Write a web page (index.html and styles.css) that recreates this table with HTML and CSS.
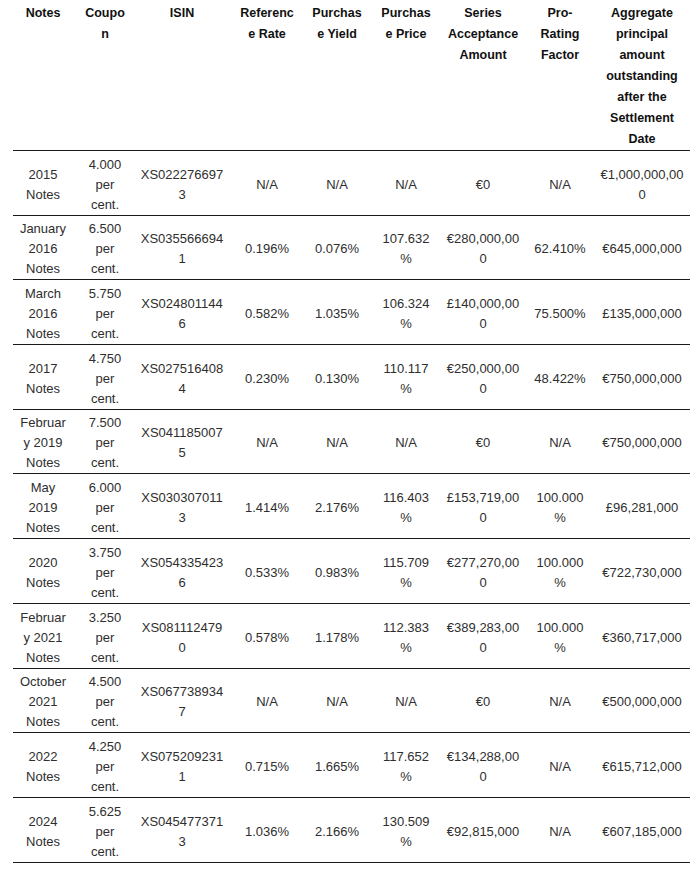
FILE: index.html
```html
<!DOCTYPE html>
<html>
<head>
<meta charset="utf-8">
<link rel="stylesheet" href="styles.css">
</head>
<body>
<table class="notes-table">
  <colgroup>
    <col class="w1"><col class="w2"><col class="w3"><col class="w4"><col class="w5"><col class="w6"><col class="w7"><col class="w8"><col class="w9">
  </colgroup>
  <thead>
    <tr>
      <th class="c1">Notes</th>
      <th class="c2">Coupon</th>
      <th class="c3">ISIN</th>
      <th class="c4">Reference Rate</th>
      <th class="c5">Purchase Yield</th>
      <th class="c6">Purchase Price</th>
      <th class="c7">Series Acceptance Amount</th>
      <th class="c8">Pro-Rating Factor</th>
      <th class="c9">Aggregate principal amount outstanding after the Settlement Date</th>
    </tr>
  </thead>
  <tbody>
    <tr><td class="c1">2015 Notes</td><td class="c2">4.000 per cent.</td><td class="c3">XS0222766973</td><td class="c4">N/A</td><td class="c5">N/A</td><td class="c6">N/A</td><td class="c7">€0</td><td class="c8">N/A</td><td class="c9">€1,000,000,000</td></tr>
    <tr><td class="c1">January 2016 Notes</td><td class="c2">6.500 per cent.</td><td class="c3">XS0355666941</td><td class="c4">0.196%</td><td class="c5">0.076%</td><td class="c6">107.632%</td><td class="c7">€280,000,000</td><td class="c8">62.410%</td><td class="c9">€645,000,000</td></tr>
    <tr><td class="c1">March 2016 Notes</td><td class="c2">5.750 per cent.</td><td class="c3">XS0248011446</td><td class="c4">0.582%</td><td class="c5">1.035%</td><td class="c6">106.324%</td><td class="c7">£140,000,000</td><td class="c8">75.500%</td><td class="c9">£135,000,000</td></tr>
    <tr><td class="c1">2017 Notes</td><td class="c2">4.750 per cent.</td><td class="c3">XS0275164084</td><td class="c4">0.230%</td><td class="c5">0.130%</td><td class="c6">110.117%</td><td class="c7">€250,000,000</td><td class="c8">48.422%</td><td class="c9">€750,000,000</td></tr>
    <tr><td class="c1">February 2019 Notes</td><td class="c2">7.500 per cent.</td><td class="c3">XS0411850075</td><td class="c4">N/A</td><td class="c5">N/A</td><td class="c6">N/A</td><td class="c7">€0</td><td class="c8">N/A</td><td class="c9">€750,000,000</td></tr>
    <tr><td class="c1">May 2019 Notes</td><td class="c2">6.000 per cent.</td><td class="c3">XS0303070113</td><td class="c4">1.414%</td><td class="c5">2.176%</td><td class="c6">116.403%</td><td class="c7">£153,719,000</td><td class="c8">100.000%</td><td class="c9">£96,281,000</td></tr>
    <tr><td class="c1">2020 Notes</td><td class="c2">3.750 per cent.</td><td class="c3">XS0543354236</td><td class="c4">0.533%</td><td class="c5">0.983%</td><td class="c6">115.709%</td><td class="c7">€277,270,000</td><td class="c8">100.000%</td><td class="c9">€722,730,000</td></tr>
    <tr><td class="c1">February 2021 Notes</td><td class="c2">3.250 per cent.</td><td class="c3">XS0811124790</td><td class="c4">0.578%</td><td class="c5">1.178%</td><td class="c6">112.383%</td><td class="c7">€389,283,000</td><td class="c8">100.000%</td><td class="c9">€360,717,000</td></tr>
    <tr><td class="c1">October 2021 Notes</td><td class="c2">4.500 per cent.</td><td class="c3">XS0677389347</td><td class="c4">N/A</td><td class="c5">N/A</td><td class="c6">N/A</td><td class="c7">€0</td><td class="c8">N/A</td><td class="c9">€500,000,000</td></tr>
    <tr><td class="c1">2022 Notes</td><td class="c2">4.250 per cent.</td><td class="c3">XS0752092311</td><td class="c4">0.715%</td><td class="c5">1.665%</td><td class="c6">117.652%</td><td class="c7">€134,288,000</td><td class="c8">N/A</td><td class="c9">€615,712,000</td></tr>
    <tr><td class="c1">2024 Notes</td><td class="c2">5.625 per cent.</td><td class="c3">XS0454773713</td><td class="c4">1.036%</td><td class="c5">2.166%</td><td class="c6">130.509%</td><td class="c7">€92,815,000</td><td class="c8">N/A</td><td class="c9">€607,185,000</td></tr>
  </tbody>
</table>
</body>
</html>
```
FILE: styles.css
```css
html, body {
  margin: 0;
  padding: 0;
  background: #ffffff;
}

body {
  font-family: "Liberation Sans", Arial, sans-serif;
  color: #2e2e2e;
}

.notes-table {
  margin: 0 0 0 13px;
  width: 677px;
  table-layout: fixed;
  border-collapse: collapse;
  border-spacing: 0;
}

.w1 { width: 60px; }
.w2 { width: 64px; }
.w3 { width: 90px; }
.w4 { width: 80px; }
.w5 { width: 60px; }
.w6 { width: 78px; }
.w7 { width: 76px; }
.w8 { width: 78px; }
.w9 { width: 91px; }

.notes-table th,
.notes-table td {
  text-align: center;
  overflow-wrap: anywhere;
  word-break: normal;
  border-bottom: 1px solid #1a1a1a;
}

.notes-table th {
  font-size: 12.5px;
  font-weight: bold;
  color: #111111;
  line-height: 21px;
  vertical-align: top;
  padding-top: 3px;
  padding-bottom: 0;
}

.notes-table td {
  font-size: 13px;
  line-height: 20px;
  vertical-align: middle;
  padding-top: 3.7px;
  padding-bottom: 0;
}

.c1 { padding-left: 5px; padding-right: 5px; }
.c2 { padding-left: 10px; padding-right: 10px; }
.c3 { padding-left: 2px; padding-right: 2px; }
.c4 { padding-left: 11px; padding-right: 11px; }
.c5 { padding-left: 4px; padding-right: 4px; }
.c6 { padding-left: 13px; padding-right: 13px; }
.c7 { padding-left: 0; padding-right: 0; }
.c8 { padding-left: 11px; padding-right: 11px; }
.c9 { padding-left: 0; padding-right: 5px; }
```
